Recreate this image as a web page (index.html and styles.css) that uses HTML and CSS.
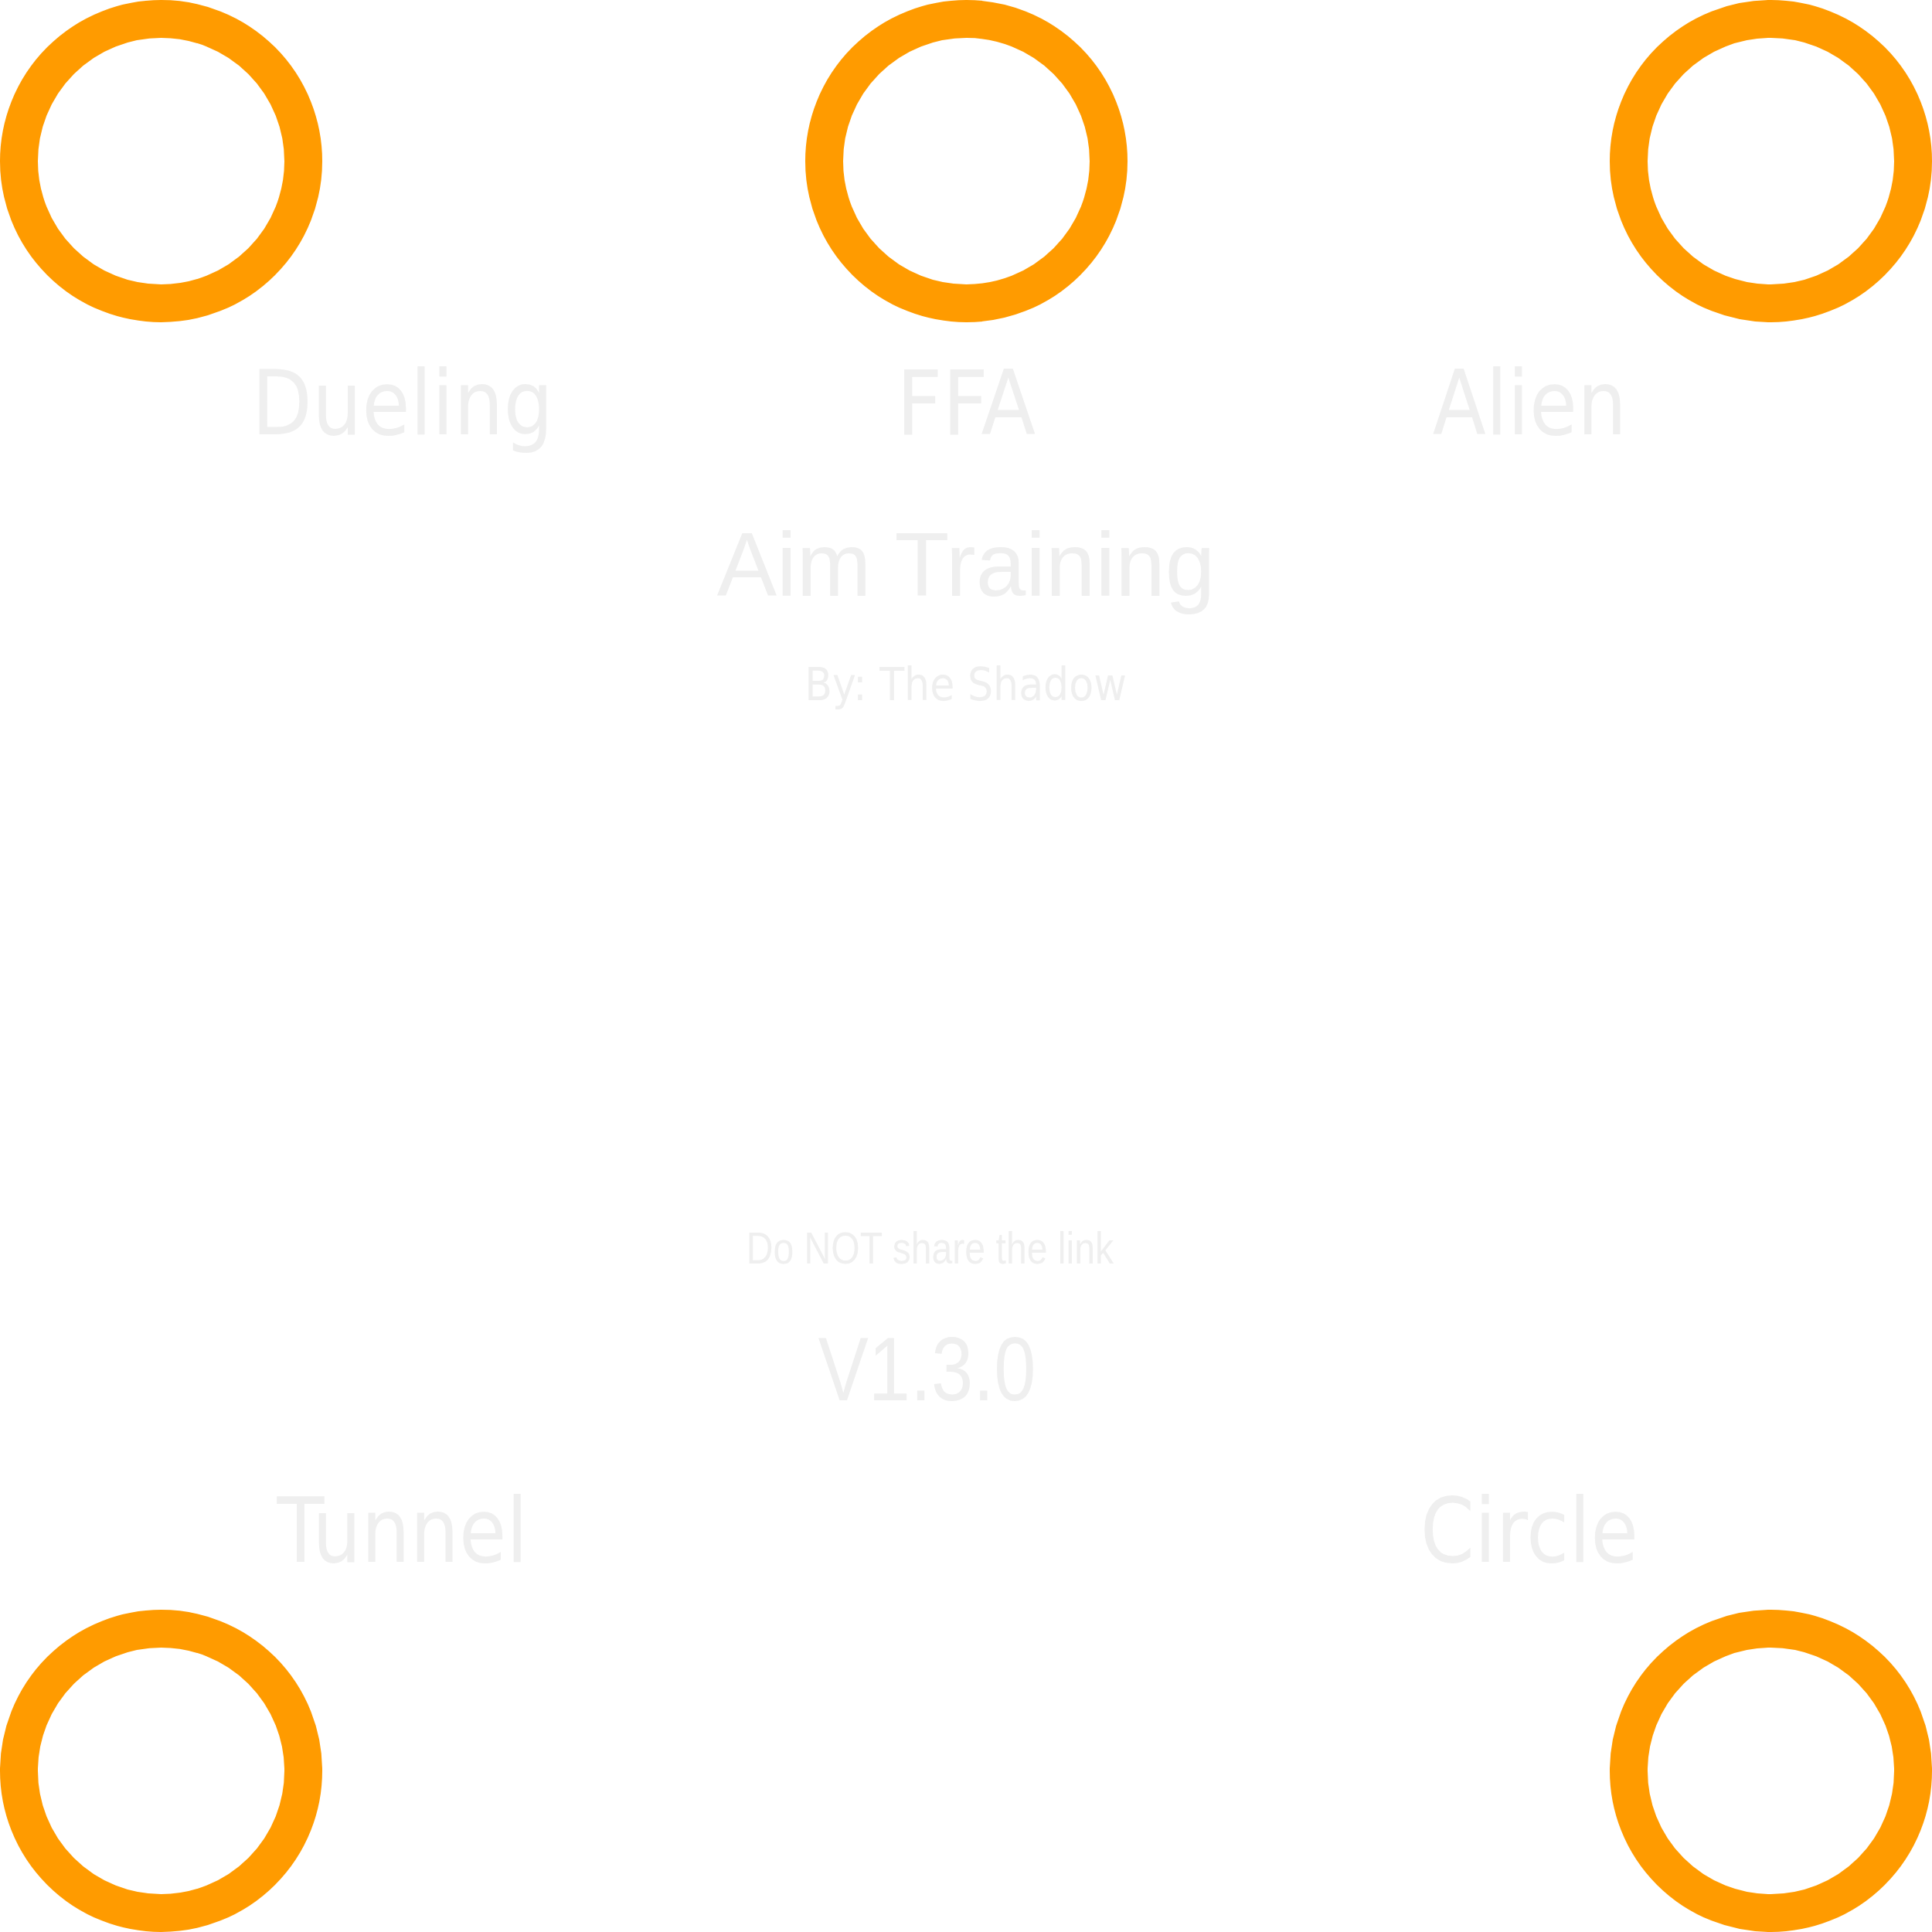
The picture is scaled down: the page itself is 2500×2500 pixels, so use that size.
FILE: index.html
```html
<!DOCTYPE html>
<html lang="en">
<head>
<meta charset="utf-8">
<title>Aim Training</title>
<link rel="stylesheet" href="styles.css">
</head>
<body>
<div class="stage">
  <div class="ring-row">
    <div class="ring"></div>
    <div class="ring"></div>
    <div class="ring"></div>
  </div>
  <div class="labels labels-top">
    <div class="cell"><span class="label dueling">Dueling</span></div>
    <div class="cell"><span class="label ffa">FFA</span></div>
    <div class="cell"><span class="label alien">Alien</span></div>
  </div>
  <div class="title"><span class="txt">Aim Training</span></div>
  <div class="author"><span class="txt">By: The Shadow</span></div>
  <div class="warn"><span class="txt">Do NOT share the link</span></div>
  <div class="version"><span class="txt">V1.3.0</span></div>
  <div class="labels labels-bottom">
    <div class="cell"><span class="label tunnel">Tunnel</span></div>
    <div class="cell"></div>
    <div class="cell"><span class="label circle">Circle</span></div>
  </div>
  <div class="ring-row ring-row-bottom">
    <div class="ring"></div>
    <div class="ring"></div>
  </div>
</div>
</body>
</html>
```
FILE: styles.css
```css
html, body {
  margin: 0;
  padding: 0;
  background: #ffffff;
}

.stage {
  width: 2500px;
  height: 2500px;
  display: flex;
  flex-direction: column;
  color: #efefef;
  white-space: nowrap;
}

.ring-row {
  display: flex;
  justify-content: space-between;
  height: 417px;
  flex: none;
}

.ring-row-bottom {
  margin-top: 44px;
}

.ring {
  width: 417px;
  height: 417px;
  box-sizing: border-box;
  border: 49px solid #ff9b00;
  border-radius: 50%;
}

.labels {
  display: grid;
  grid-template-columns: 1042px 416px 1042px;
  font-family: "DejaVu Sans", sans-serif;
  font-size: 116px;
  line-height: 116px;
  text-align: center;
  flex: none;
}

.labels-top {
  margin-top: 47px;
}

.labels-bottom {
  margin-top: 93px;
}

.label,
.txt {
  display: inline-block;
  transform-origin: 50% 50%;
}

.dueling { transform: scaleX(0.875); }
.ffa { transform: scaleX(0.89); }
.alien { transform: scaleX(0.87); }
.tunnel { transform: scaleX(0.86); }
.circle { transform: scaleX(0.867); }

.title {
  margin-top: 93px;
  font-family: "Liberation Sans", Arial, sans-serif;
  font-size: 116px;
  line-height: 116px;
  text-align: center;
}

.author {
  margin-top: 68px;
  font-family: "DejaVu Sans", sans-serif;
  font-size: 58px;
  line-height: 58px;
  text-align: center;
}

.author .txt { transform: scaleX(0.9); }

.warn {
  margin-top: 671px;
  padding-right: 93px;
  font-family: "Liberation Sans", Arial, sans-serif;
  font-size: 58px;
  line-height: 58px;
  text-align: center;
}

.warn .txt { transform: scaleX(0.83); }

.version {
  margin-top: 70px;
  padding-right: 101px;
  font-family: "Liberation Sans", Arial, sans-serif;
  font-size: 116px;
  line-height: 116px;
  text-align: center;
}

.version .txt { transform: scaleX(0.84); }
```
